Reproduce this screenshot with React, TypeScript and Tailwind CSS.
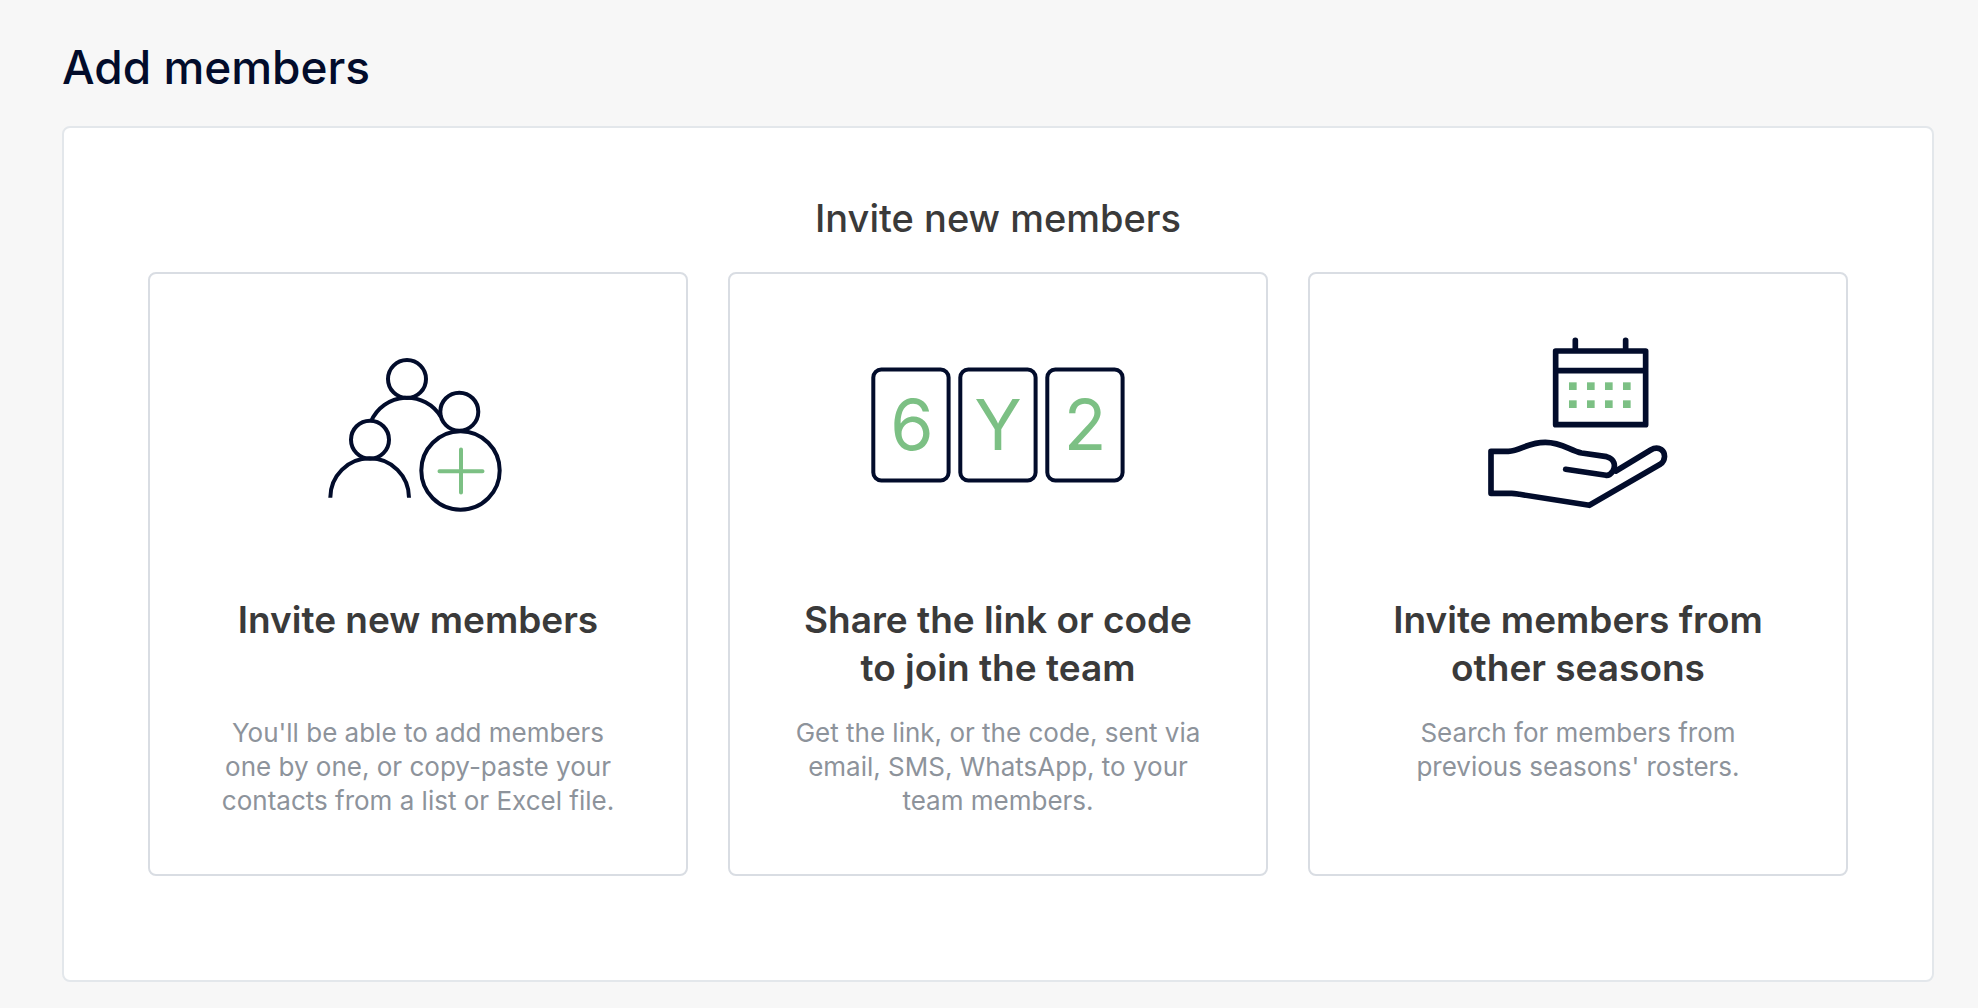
import type { ReactNode } from "react";

const MembersIcon = () => (
  <svg className="w-80 h-50" viewBox="0 0 320 200" fill="none" stroke="#020c2b" strokeWidth={4} aria-hidden="true">
    <circle cx="149" cy="55" r="19" />
    <circle cx="112" cy="115.7" r="19" />
    <circle cx="201.3" cy="87.7" r="19" />
    <circle cx="202.5" cy="146.5" r="39.2" />
    <path d="M72.3 173.7a39.3 39.3 0 0 1 78.7 0" />
    <path d="M113 97.5A39.3 39.3 0 0 1 183 93" />
    <path d="M203 125.5v43M181.5 147.3h43" stroke="#7cc084" strokeLinecap="round" />
  </svg>
);

const CodeIcon = () => (
  <svg className="w-80 h-50" viewBox="0 0 320 200" fill="none" aria-hidden="true">
    <g stroke="#020c2b" strokeWidth={4}>
      <rect x="35.3" y="45.5" width="75.3" height="111" rx="8" />
      <rect x="122.3" y="45.5" width="75.3" height="111" rx="8" />
      <rect x="209.3" y="45.5" width="75.3" height="111" rx="8" />
    </g>
    <g fill="#7cc084" fontFamily="Inter, sans-serif" fontSize={70} textAnchor="middle">
      <text x="74" y="126">6</text>
      <text x="160" y="126">Y</text>
      <text x="247" y="126">2</text>
    </g>
  </svg>
);

const SeasonsIcon = () => (
  <svg className="w-80 h-50" viewBox="0 0 320 200" fill="none" aria-hidden="true">
    <g transform="translate(42 -4) scale(.3333)">
      <g stroke="#020c2b" strokeWidth={17} strokeLinecap="round" strokeLinejoin="round">
        <path d="M287 93h270v221H287zM287 152h270M346 61v32M497 61v32" />
        <path d="M317 448l121 18c9 1 14-3 20-12 10-16 6-38-18-44l-75-11c-36-7-58-32-109-32-55 0-72 25-111 27H93v126h62c10 0 17 2 24 3l209 33 214-124c14-9 16-33 2-43-10-7-22-5-32 1l-104 63" />
      </g>
      <g fill="#7cc084">
        {[187, 241].map((y) =>
          [327, 381, 435, 489].map((x) => <rect key={`${x}-${y}`} x={x} y={y} width="23" height="23" />)
        )}
      </g>
    </g>
  </svg>
);

type Option = { id: string; title: string; text: string; icon: ReactNode };

const options: Option[] = [
  {
    id: "invite",
    title: "Invite new members",
    text: "You'll be able to add members one by one, or copy-paste your contacts from a list or Excel file.",
    icon: <MembersIcon />,
  },
  {
    id: "share",
    title: "Share the link or code to join the team",
    text: "Get the link, or the code, sent via email, SMS, WhatsApp, to your team members.",
    icon: <CodeIcon />,
  },
  {
    id: "seasons",
    title: "Invite members from other seasons",
    text: "Search for members from previous seasons' rosters.",
    icon: <SeasonsIcon />,
  },
];

export default function App() {
  return (
    <div className="min-h-screen bg-[#f7f7f7] pt-10 pb-6 pl-[62px] pr-[44px] font-['Inter',sans-serif]">
      <h1 className="text-[46px] leading-[54px] font-medium text-[#020c2b] mb-8">Add members</h1>

      <main className="bg-white border-2 border-[#e3e7eb] rounded-lg px-[84px] pt-[66px] pb-[104px]">
        <h2 className="text-[38px] leading-[48px] font-medium text-[#3a3a3a] text-center mb-[30px]">Invite new members</h2>

        <div className="grid grid-cols-3 gap-10">
          {options.map((option) => (
            <a
              key={option.id}
              href={`#${option.id}`}
              className="flex flex-col items-center text-center border-2 border-[#d9dde3] rounded-lg px-[60px] pt-[50px] pb-14 hover:border-[#7cc084]"
            >
              {option.icon}
              <h3 className="mt-[72px] min-h-[96px] text-[37px] leading-[48px] font-semibold text-[#3a3a3a]">{option.title}</h3>
              <p className="mt-6 text-[26px] leading-[34px] text-[#8d939b]">{option.text}</p>
            </a>
          ))}
        </div>
      </main>
    </div>
  );
}
